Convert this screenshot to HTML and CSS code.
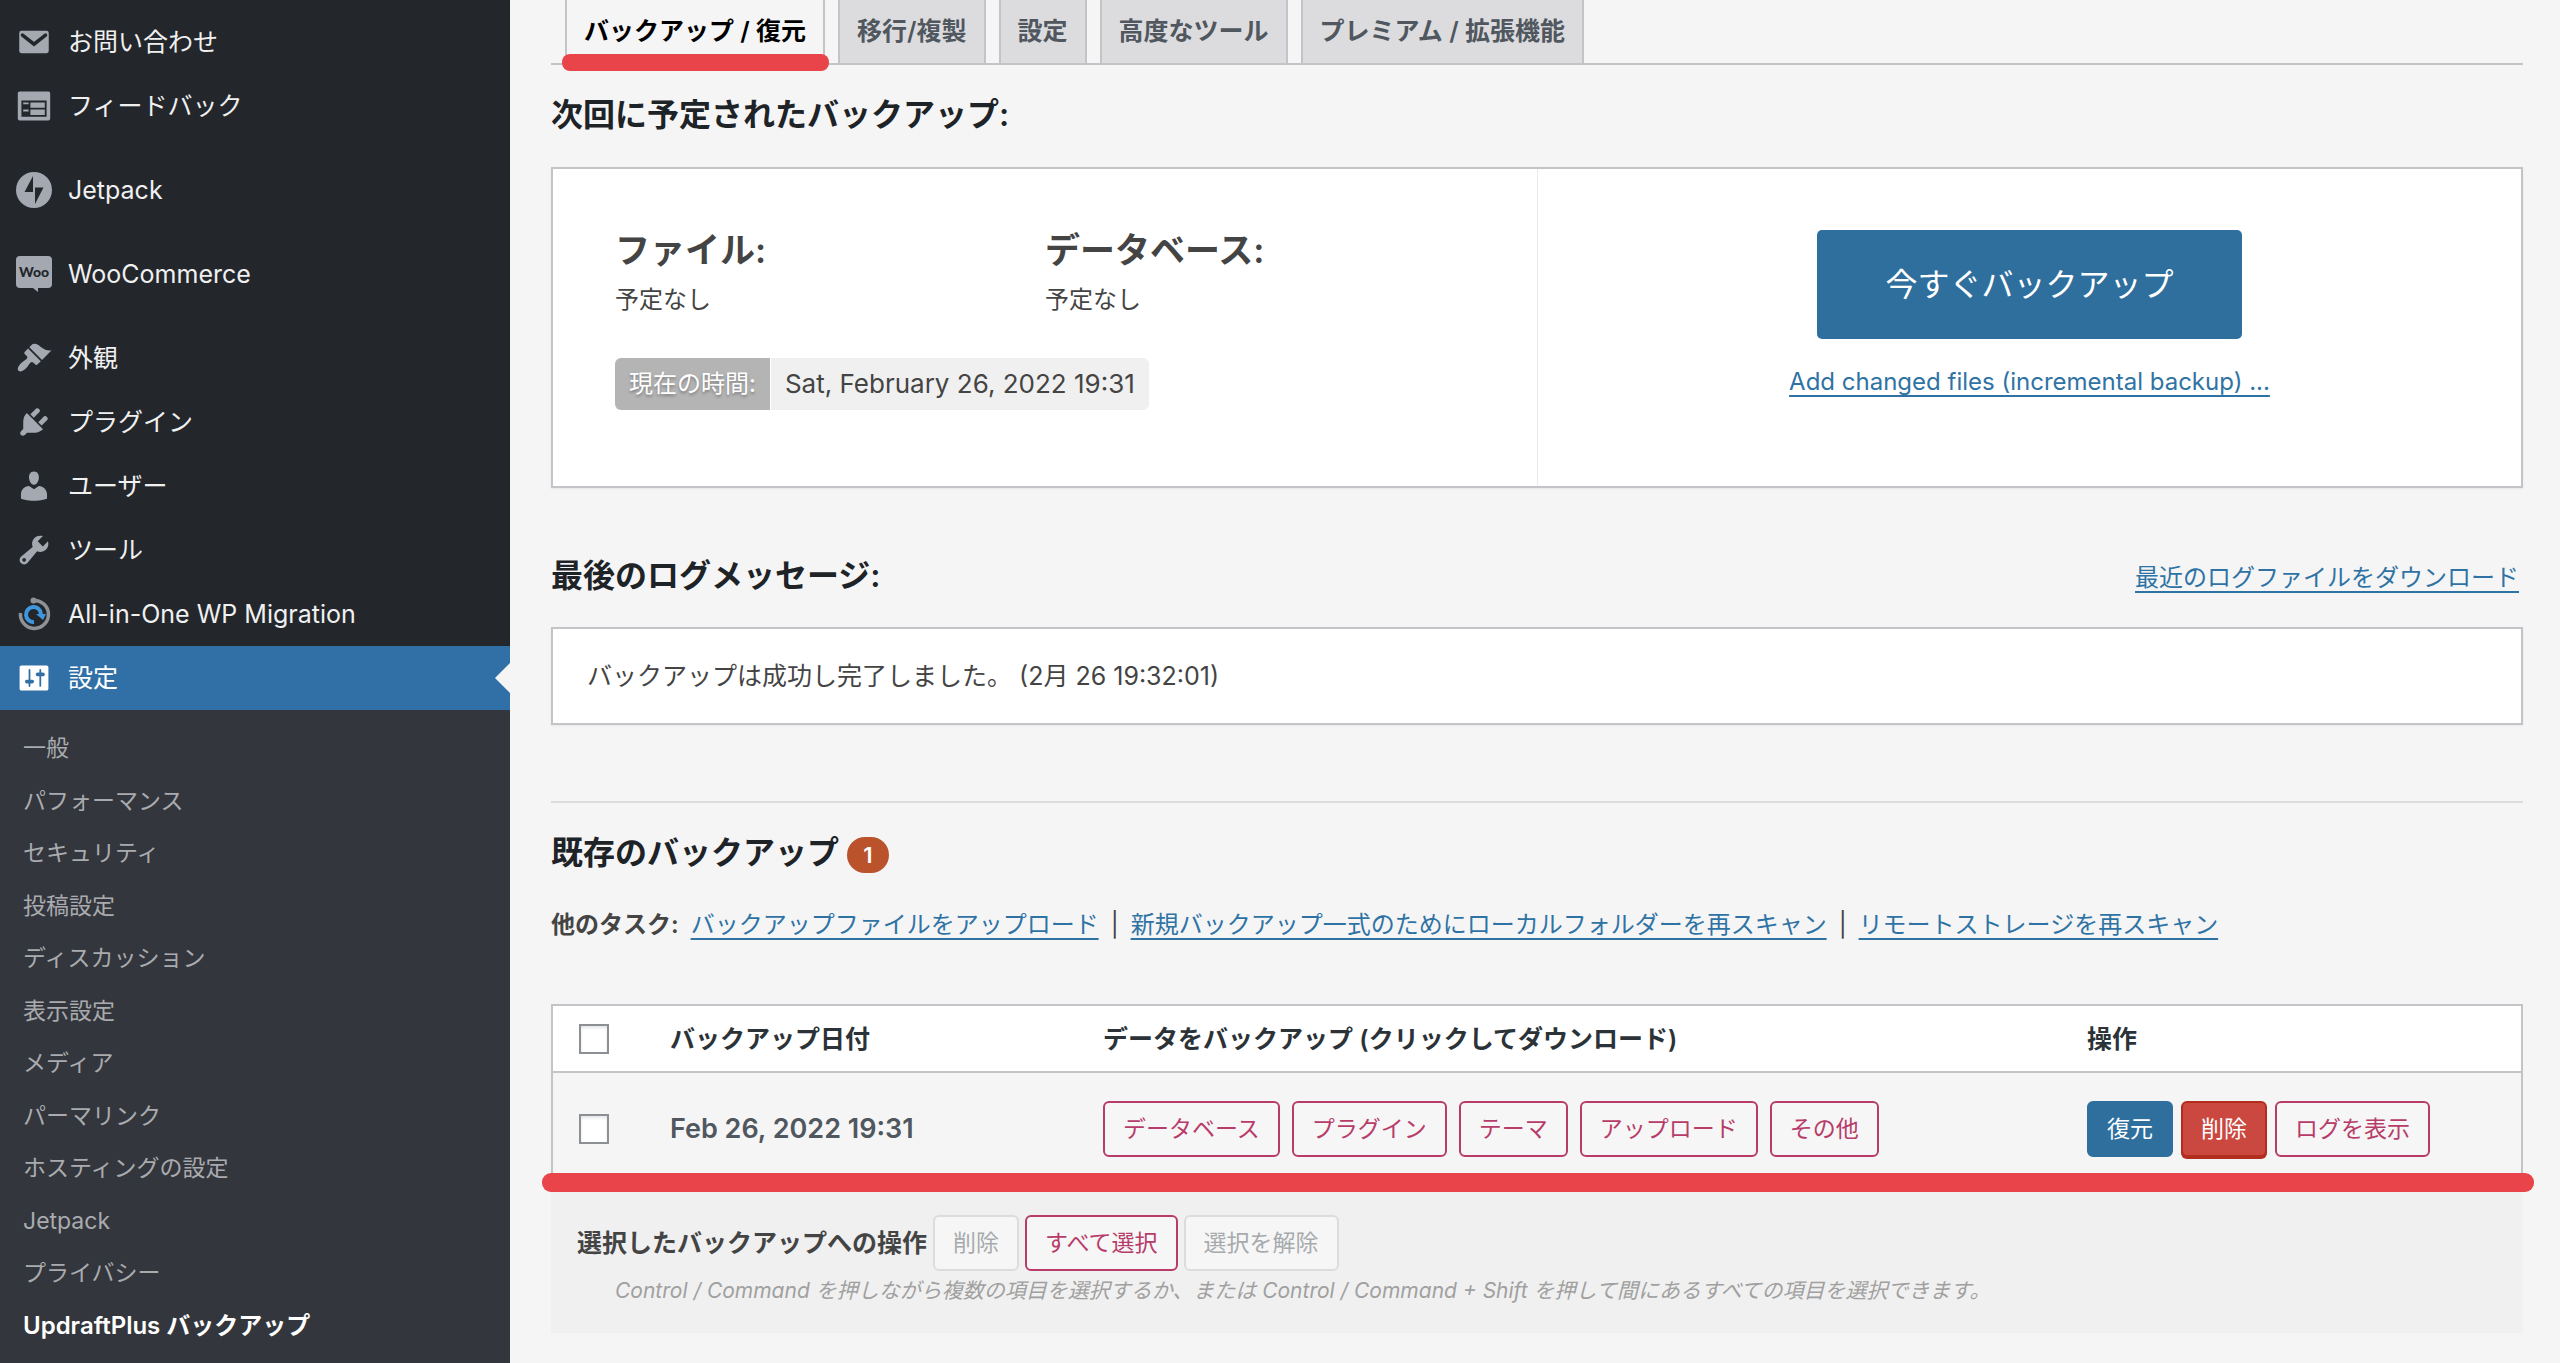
FILE: index.html
```html
<!DOCTYPE html>
<html lang="ja">
<head>
<meta charset="utf-8">
<meta name="viewport" content="width=device-width, initial-scale=1">
<title>UpdraftPlus バックアップ</title>
<link rel="stylesheet" href="styles.css">
</head>
<body>
<nav class="sidebar" aria-label="管理メニュー">
  <ul class="menu">
    <li><a href="#" class="menu-link"><svg class="icon" viewBox="0 0 20 20"><path d="M3 3.800h14a1.200 1.200 0 0 1 1.200 1.200v10a1.200 1.200 0 0 1-1.200 1.200H3A1.200 1.200 0 0 1 1.800 15V5A1.200 1.200 0 0 1 3 3.800z"/><path class="cut-line" d="M3.600 6.200L10 11.200l6.400-5"/></svg>お問い合わせ</a></li>
    <li><a href="#" class="menu-link"><svg class="icon" viewBox="0 0 20 20"><path d="M2 2h16c.55 0 1 .45 1 1v14c0 .55-.45 1-1 1H2c-.55 0-1-.45-1-1V3c0-.55.45-1 1-1zm15 14V7H3v9h14zM4 8v1h3V8H4zm4 0v3h8V8H8zm-4 4v1h3v-1H4zm4 0v3h8v-3H8z"/></svg>フィードバック</a></li>
    <li class="group"><a href="#" class="menu-link"><svg class="icon" viewBox="0 0 36 36"><circle cx="18" cy="18" r="18"/><path class="cut" d="M17 4v16H8.500zM19 32V15.500h8.500z"/></svg>Jetpack</a></li>
    <li class="group"><a href="#" class="menu-link"><svg class="icon" viewBox="0 0 36 36"><path d="M4 0h28a4 4 0 0 1 4 4v24a4 4 0 0 1-4 4H22v4l-5-4H4a4 4 0 0 1-4-4V4a4 4 0 0 1 4-4z"/><text class="cut woo" x="18" y="21" text-anchor="middle">Woo</text></svg>WooCommerce</a></li>
    <li class="group"><a href="#" class="menu-link"><svg class="icon" viewBox="0 0 20 20"><path d="M14.480 11.060L7.410 3.990l1.500-1.500c.5-.56 2.300-.47 3.510.32 1.210.8 1.430 1.280 2.910 2.100 1.180.64 2.450 1.260 4.450.85zm-.71.71L6.700 4.700 4.930 6.470c-.39.39-.39 1.020 0 1.410l1.060 1.060c.39.39.39 1.030 0 1.420-.6.6-1.430 1.110-2.210 1.690-.35.26-.7.53-1.010.84C1.430 14.230.4 16.080 1.400 17.070c.99 1 2.840-.03 4.180-1.360.31-.31.58-.66.85-1.020.57-.78 1.080-1.610 1.690-2.210.39-.39 1.020-.39 1.410 0l1.060 1.060c.39.39 1.020.39 1.410 0z"/></svg>外観</a></li>
    <li><a href="#" class="menu-link"><svg class="icon" viewBox="0 0 20 20"><path d="M13.110 4.360L9.870 7.600 8 5.730l3.240-3.240c.35-.34 1.050-.2 1.560.32.52.51.66 1.210.31 1.550zm-8 1.770l.91-1.120 9.010 9.010-1.190.84c-.71.71-2.630 1.160-3.820 1.160H6.140L4.900 17.260c-.59.59-1.540.59-2.120 0-.59-.58-.59-1.530 0-2.120l1.240-1.240v-3.880c0-1.130.4-3.190 1.090-3.890zm7.260 3.970l3.240-3.240c.34-.35 1.040-.21 1.550.31.52.51.66 1.210.31 1.550l-3.240 3.250z"/></svg>プラグイン</a></li>
    <li><a href="#" class="menu-link"><svg class="icon" viewBox="0 0 20 20"><path d="M10 9.250c-2.270 0-2.730-3.440-2.730-3.440C7 4.020 7.820 2 9.970 2c2.160 0 2.980 2.020 2.710 3.810 0 0-.41 3.440-2.680 3.440zm0 2.570L12.720 10c2.390 0 4.520 2.330 4.520 4.530v2.490s-3.650 1.130-7.240 1.130c-3.650 0-7.240-1.130-7.240-1.130v-2.490c0-2.250 1.940-4.480 4.470-4.480z"/></svg>ユーザー</a></li>
    <li><a href="#" class="menu-link"><svg class="icon" viewBox="0 0 20 20"><path d="M16.680 9.770c-1.340 1.340-3.300 1.670-4.950.99l-5.410 6.520c-.99.99-2.590.99-3.580 0s-.99-2.590 0-3.570l6.520-5.420c-.68-1.650-.35-3.610.99-4.950 1.280-1.280 3.120-1.620 4.720-1.060l-2.890 2.890 2.820 2.820 2.860-2.870c.53 1.580.18 3.390-1.080 4.650zM3.810 16.210c.4.39 1.040.39 1.430 0 .4-.4.4-1.040 0-1.430-.39-.4-1.030-.4-1.430 0-.39.39-.39 1.030 0 1.430z"/></svg>ツール</a></li>
    <li><a href="#" class="menu-link"><svg class="icon" viewBox="0 0 36 36"><g fill="none"><path stroke="#8f9194" stroke-width="3.500" d="M17 4.500A14 14 0 1 1 4.500 17"/><path stroke="#3f96dc" stroke-width="4" d="M18 26a7.500 7.500 0 1 1 7-8"/></g><circle cx="17.500" cy="4.500" r="3" fill="#8f9194"/><path fill="#3f96dc" d="M20 18h10l-3 6z"/></svg>All-in-One WP Migration</a></li>
    <li><a href="#" class="menu-link current"><svg class="icon" viewBox="0 0 20 20"><path d="M18 16V4c0-.55-.45-1-1-1H3c-.55 0-1 .45-1 1v12c0 .55.45 1 1 1h14c.55 0 1-.45 1-1zM8 11h1c.55 0 1 .45 1 1s-.45 1-1 1H8v1.500c0 .28-.22.5-.5.5s-.5-.22-.5-.5V13H6c-.55 0-1-.45-1-1s.45-1 1-1h1V5.500c0-.28.22-.5.5-.5s.5.22.5.5V11zm5-2h-1c-.55 0-1-.45-1-1s.45-1 1-1h1V5.500c0-.28.22-.5.5-.5s.5.22.5.5V7h1c.55 0 1 .45 1 1s-.45 1-1 1h-1v5.500c0 .28-.22.5-.5.5s-.5-.22-.5-.5V9z"/></svg>設定</a></li>
  </ul>
  <ul class="submenu">
    <li><a href="#">一般</a></li>
    <li><a href="#">パフォーマンス</a></li>
    <li><a href="#">セキュリティ</a></li>
    <li><a href="#">投稿設定</a></li>
    <li><a href="#">ディスカッション</a></li>
    <li><a href="#">表示設定</a></li>
    <li><a href="#">メディア</a></li>
    <li><a href="#">パーマリンク</a></li>
    <li><a href="#">ホスティングの設定</a></li>
    <li><a href="#">Jetpack</a></li>
    <li><a href="#">プライバシー</a></li>
    <li><a href="#" class="active" aria-current="page">UpdraftPlus バックアップ</a></li>
  </ul>
</nav>

<main class="content">
  <nav class="tabs" aria-label="UpdraftPlus">
    <a href="#" class="tab tab-active">バックアップ / 復元</a>
    <a href="#" class="tab">移行/複製</a>
    <a href="#" class="tab">設定</a>
    <a href="#" class="tab">高度なツール</a>
    <a href="#" class="tab">プレミアム / 拡張機能</a>
  </nav>

  <h2 class="heading">次回に予定されたバックアップ:</h2>
  <section class="panel schedule">
    <div class="schedule-info">
      <div class="schedule-columns">
        <div>
          <h3 class="schedule-title">ファイル:</h3>
          <p class="schedule-value">予定なし</p>
        </div>
        <div>
          <h3 class="schedule-title">データベース:</h3>
          <p class="schedule-value">予定なし</p>
        </div>
      </div>
      <div class="clock"><span class="clock-label">現在の時間:</span><span class="clock-value">Sat, February 26, 2022 19:31</span></div>
    </div>
    <div class="schedule-action">
      <button type="button" class="backup-now">今すぐバックアップ</button>
      <a href="#" class="link">Add changed files (incremental backup) ...</a>
    </div>
  </section>

  <div class="log-head">
    <h2 class="heading">最後のログメッセージ:</h2>
    <a href="#" class="link">最近のログファイルをダウンロード</a>
  </div>
  <p class="panel log">バックアップは成功し完了しました。 (2月 26 19:32:01)</p>

  <hr class="rule">

  <h2 class="heading">既存のバックアップ<span class="badge">1</span></h2>
  <div class="tasks">
    <strong>他のタスク:</strong>
    <a href="#" class="link">バックアップファイルをアップロード</a>
    <span>|</span>
    <a href="#" class="link">新規バックアップ一式のためにローカルフォルダーを再スキャン</a>
    <span>|</span>
    <a href="#" class="link">リモートストレージを再スキャン</a>
  </div>

  <section class="backups">
    <table class="table">
      <thead>
        <tr>
          <th class="col-check"><input type="checkbox" class="check" aria-label="すべて選択"></th>
          <th class="col-date">バックアップ日付</th>
          <th class="col-data">データをバックアップ (クリックしてダウンロード)</th>
          <th>操作</th>
        </tr>
      </thead>
      <tbody>
        <tr>
          <td><input type="checkbox" class="check" aria-label="Feb 26, 2022 19:31"></td>
          <td class="date">Feb 26, 2022 19:31</td>
          <td>
            <div class="buttons buttons-data">
              <button type="button" class="btn">データベース</button>
              <button type="button" class="btn">プラグイン</button>
              <button type="button" class="btn">テーマ</button>
              <button type="button" class="btn">アップロード</button>
              <button type="button" class="btn">その他</button>
            </div>
          </td>
          <td>
            <div class="buttons">
              <button type="button" class="btn btn-primary">復元</button>
              <button type="button" class="btn btn-danger">削除</button>
              <button type="button" class="btn">ログを表示</button>
            </div>
          </td>
        </tr>
      </tbody>
    </table>
    <div class="bulk">
      <div class="buttons buttons-bulk">
        <strong class="bulk-label">選択したバックアップへの操作</strong>
        <button type="button" class="btn" disabled>削除</button>
        <button type="button" class="btn">すべて選択</button>
        <button type="button" class="btn" disabled>選択を解除</button>
      </div>
      <p class="hint">Control / Command を押しながら複数の項目を選択するか、または Control / Command + Shift を押して間にあるすべての項目を選択できます。</p>
    </div>
  </section>
</main>
</body>
</html>
```
FILE: styles.css
```css
* { box-sizing: border-box; }

body {
  margin: 0;
  min-height: 100vh;
  display: flex;
  background: #f5f5f5;
  color: #444;
  font-family: Inter, "Noto Sans CJK JP", sans-serif;
  font-size: 24px;
  line-height: 32px;
}

h2, h3, p, ul { margin: 0; padding: 0; }
ul { list-style: none; }
button { font-family: inherit; cursor: pointer; }
strong { font-weight: 600; }

/* sidebar */
.sidebar {
  flex: none;
  width: 510px;
  display: flex;
  flex-direction: column;
  background: #23272c;
}
.menu { padding-top: 10px; }
.group { margin-top: 20px; }
.menu-link {
  position: relative;
  display: flex;
  align-items: center;
  gap: 16px;
  height: 64px;
  padding-left: 16px;
  color: #f0f0f1;
  font-size: 25px;
  text-decoration: none;
}
.icon { width: 36px; height: 36px; fill: #a4a9b1; overflow: visible; }
.icon .cut { fill: #23272c; }
.icon .cut-line { fill: none; stroke: #23272c; stroke-width: 2; stroke-linecap: round; }
.woo { font-family: Lato, sans-serif; font-size: 14px; font-weight: 900; }
.current { background: #3170a7; color: #fff; }
.current .icon { fill: #fff; }
.current::after {
  content: "";
  position: absolute;
  right: 0;
  top: 17px;
  border: 15px solid transparent;
  border-left-width: 0;
  border-right-color: #f5f5f5;
}
.submenu {
  flex: 1;
  display: flex;
  flex-direction: column;
  padding: 12px 0 11px;
  background: #33363c;
}
.submenu li { flex: 1; min-height: 52px; }
.submenu a {
  display: block;
  padding-left: 23px;
  color: #a9abaf;
  font-size: 23px;
  line-height: 52px;
  text-decoration: none;
}
.submenu .active { color: #fff; font-size: 24px; font-weight: 600; }

/* main column */
.content { flex: 1; min-width: 0; padding: 0 37px 0 41px; }

.tabs {
  display: flex;
  gap: 13px;
  padding-left: 14px;
  border-bottom: 2px solid #c3c4c7;
}
.tab {
  position: relative;
  padding: 11px 17px 12px;
  border: 2px solid #c3c4c7;
  border-width: 0 2px;
  background: #dcdcde;
  color: #50575e;
  font-size: 25px;
  font-weight: 600;
  line-height: 40px;
  text-decoration: none;
}
.tab-active { background: #f5f5f5; color: #000; }
.tab-active::after {
  content: "";
  position: absolute;
  left: -5px;
  right: -6px;
  bottom: -8px;
  height: 17px;
  border-radius: 8px;
  background: #e84449;
}

.heading {
  display: flex;
  align-items: center;
  gap: 8px;
  margin: 30px 0 32px;
  color: #1d2327;
  font-size: 32px;
  font-weight: 600;
  line-height: 40px;
}
.link { color: #2f73a5; text-decoration: underline; text-underline-offset: 5px; text-decoration-thickness: 2px; }

.panel {
  border: 2px solid #c3c4c7;
  background: #fff;
  box-shadow: 0 1px 2px rgba(0, 0, 0, .06);
}
.schedule { display: grid; grid-template-columns: 1fr 1fr; }
.schedule-info { padding: 61px 62px 76px; }
.schedule-columns { display: grid; grid-template-columns: 1fr 1fr; }
.schedule-title { font-size: 35px; font-weight: 600; line-height: 40px; white-space: nowrap; }
.schedule-value { margin-top: 14px; }
.clock { display: flex; gap: 1px; margin-top: 42px; line-height: 52px; }
.clock-label {
  padding: 0 14px;
  border-radius: 6px 0 0 6px;
  background: #b4b4b4;
  color: #fff;
  text-shadow: 0 2px 3px rgba(0, 0, 0, .3);
}
.clock-value { padding: 0 14px; border-radius: 0 6px 6px 0; background: #f0f0f0; font-size: 26px; }
.schedule-action {
  display: flex;
  flex-direction: column;
  align-items: center;
  gap: 27px;
  padding-top: 61px;
  border-left: 1px solid #eaeaea;
}
.backup-now {
  padding: 0 68px;
  border: 0;
  border-radius: 5px;
  background: #2f6f9d;
  color: #fff;
  font-size: 32px;
  line-height: 109px;
}

.log-head { display: flex; justify-content: space-between; align-items: center; margin-top: 68px; padding-right: 4px; }
.log-head .heading { margin: 0 0 31px; }
.log-head .link { margin-bottom: 27px; }
.log { padding: 27px 34px; font-size: 25px; line-height: 40px; }

.rule { margin: 76px 0 0; border: 0; border-top: 2px solid #dcdcde; }
.badge {
  width: 42px;
  margin-top: 4px;
  border-radius: 18px;
  background: #ba522b;
  color: #fff;
  font-size: 22px;
  line-height: 36px;
  text-align: center;
}
.tasks { display: flex; gap: 12px; line-height: 40px; }

/* backups table */
.backups { position: relative; margin-top: 59px; }
.backups::after {
  content: "";
  position: absolute;
  left: -9px;
  right: -11px;
  top: 169px;
  height: 19px;
  border-radius: 9px;
  background: #e84449;
}
.table {
  width: 100%;
  border: 2px solid #c3c4c7;
  border-bottom: 0;
  border-spacing: 0;
  table-layout: fixed;
  text-align: left;
}
.table th {
  height: 67px;
  padding: 0;
  border-bottom: 2px solid #c3c4c7;
  background: #fff;
  color: #2c3338;
  font-size: 25px;
  font-weight: 600;
}
.table td { height: 112px; padding: 0; }
.col-check { width: 117px; }
.col-date { width: 433px; }
.col-data { width: 984px; }
.table th:first-child, .table td:first-child { padding-left: 26px; }
.table .date { color: #50575e; font-size: 27px; font-weight: 600; }
.check {
  display: block;
  appearance: none;
  width: 30px;
  height: 30px;
  margin: 0;
  border: 2px solid #8c8f94;
  background: #fff;
  box-shadow: inset 0 2px 3px rgba(0, 0, 0, .1);
}

.buttons { display: flex; align-items: center; gap: 8px; }
.buttons-data { gap: 12px; }
.buttons-bulk { gap: 6px; }
.btn {
  padding: 0 18px;
  border: 2px solid #b83c69;
  border-radius: 6px;
  background: #f6f6f6;
  color: #b83c69;
  font-size: 23px;
  line-height: 52px;
  white-space: nowrap;
}
.btn:disabled { border-color: #dcdcde; color: #a7aaad; cursor: default; }
.btn-primary { border-color: #2f6f9d; background: #2f6f9d; color: #fff; }
.btn-danger { border-color: #b32d1e; background: #cb4840; color: #fff; box-shadow: 0 2px 0 #b32d1e; }

.bulk { padding: 30px 26px 22px; background: #f0f0f0; }
.bulk-label { font-size: 25px; }
.hint { padding: 4px 38px; color: #a0a0a0; font-size: 21px; font-style: italic; }
```
